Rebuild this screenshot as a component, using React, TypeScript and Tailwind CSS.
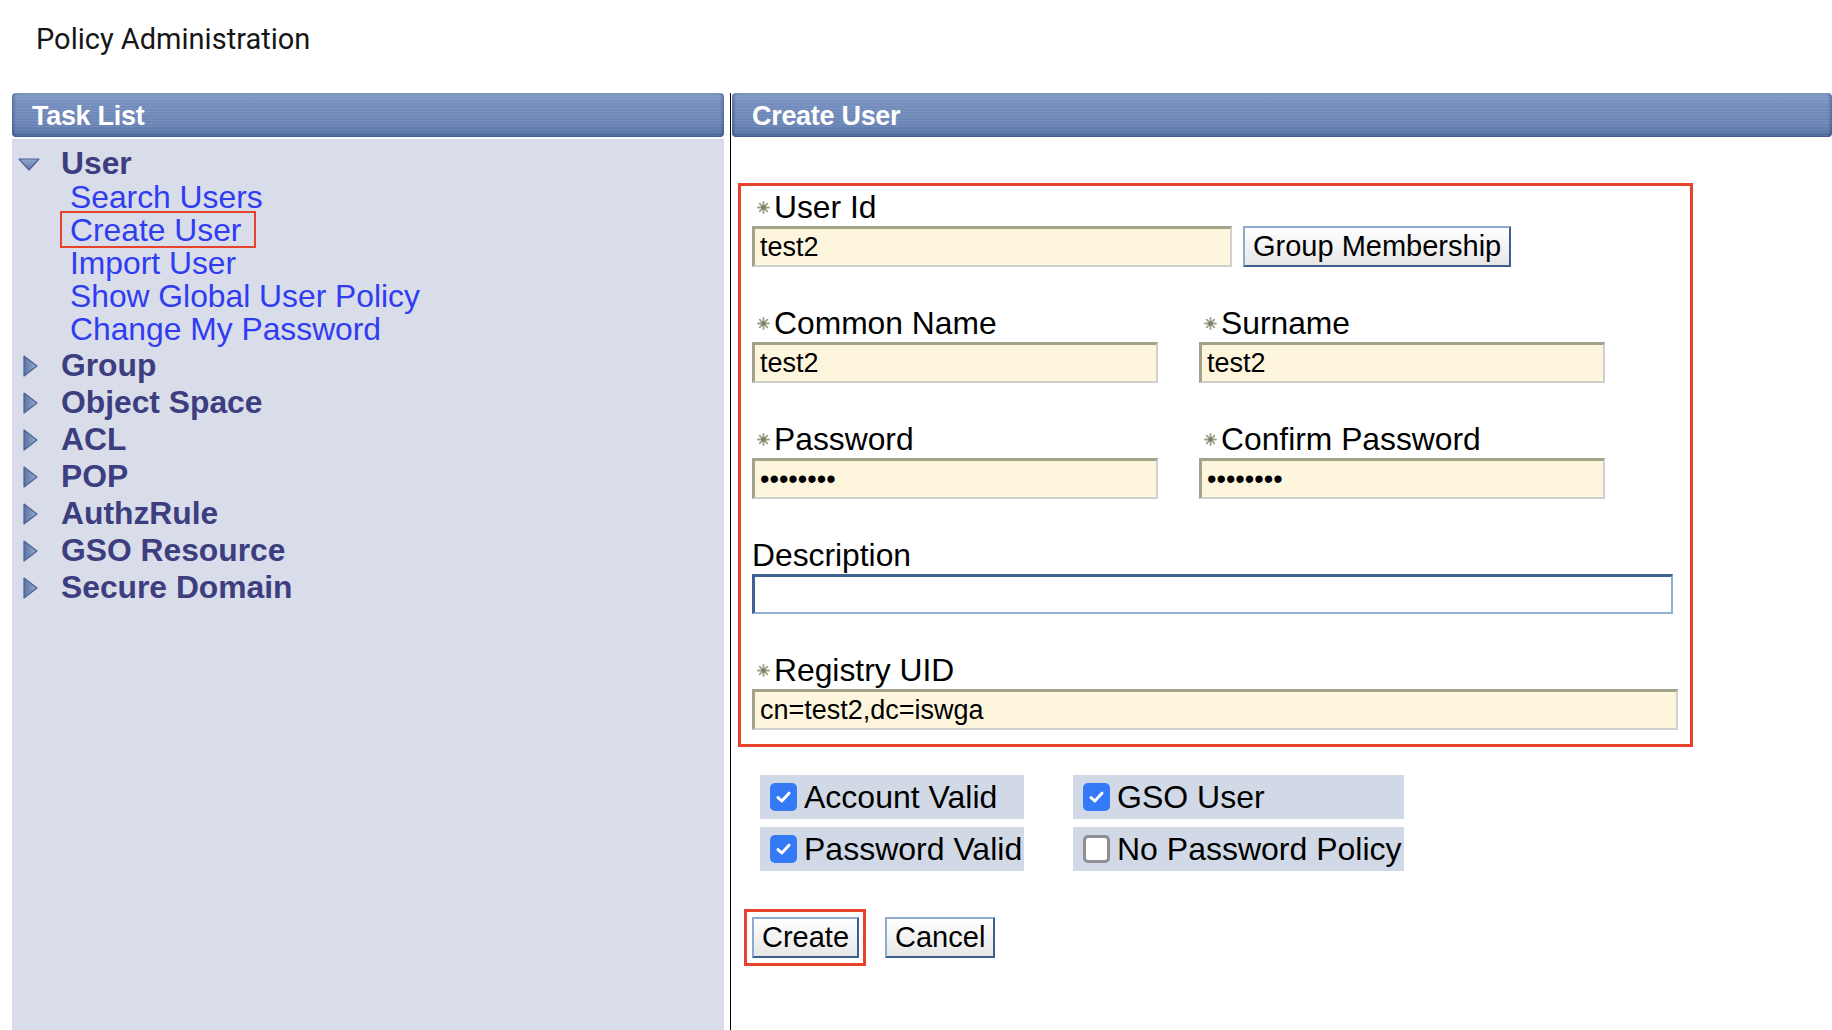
import React from "react";

const headerBg =
  "bg-[image:repeating-linear-gradient(180deg,rgba(255,255,255,0.08)_0px,rgba(255,255,255,0.08)_1px,rgba(0,0,0,0)_1px,rgba(0,0,0,0)_3px),linear-gradient(180deg,#8199c4_0%,#738cbc_30%,#6a85b6_70%,#5d78aa_88%,#48639a_100%)]";

function Header({ title }: { title: string }) {
  return (
    <div
      className={`h-[44px] shrink-0 rounded-[4px] ${headerBg} shadow-[inset_3px_0_3px_-1px_rgba(30,50,90,0.35),inset_-3px_0_3px_-1px_rgba(30,50,90,0.35)] flex items-center pl-[20px] pt-[2px] text-white font-bold text-[27px] tracking-[-0.3px]`}
    >
      {title}
    </div>
  );
}

function DownTri() {
  return (
    <svg width="22" height="13" viewBox="0 0 22 13">
      <defs>
        <linearGradient id="dt" x1="0" y1="0" x2="0" y2="1">
          <stop offset="0" stopColor="#93a8cf" />
          <stop offset="1" stopColor="#5f78a8" />
        </linearGradient>
      </defs>
      <polygon points="1,1 21,1 11,12" fill="url(#dt)" stroke="#4b6393" strokeWidth="1.2" strokeLinejoin="round" />
    </svg>
  );
}

function RightTri() {
  return (
    <svg width="15" height="22" viewBox="0 0 15 22">
      <defs>
        <linearGradient id="rt" x1="0" y1="0" x2="1" y2="0">
          <stop offset="0" stopColor="#5a73a2" />
          <stop offset="1" stopColor="#9aaed3" />
        </linearGradient>
      </defs>
      <polygon points="1,1 14,11 1,21" fill="url(#rt)" stroke="#4a6292" strokeWidth="1.2" strokeLinejoin="round" />
    </svg>
  );
}

function Star() {
  return (
    <svg width="13" height="13" viewBox="0 0 13 13">
      <g stroke="#a09f88" strokeWidth="1.8" strokeLinecap="round">
        <line x1="6.5" y1="1" x2="6.5" y2="12" />
        <line x1="1" y1="6.5" x2="12" y2="6.5" />
        <line x1="2.7" y1="2.7" x2="10.3" y2="10.3" />
        <line x1="10.3" y1="2.7" x2="2.7" y2="10.3" />
      </g>
      <circle cx="6.5" cy="6.5" r="2.2" fill="#7d7c66" />
    </svg>
  );
}

function Label({ text, star = true }: { text: string; star?: boolean }) {
  return (
    <div className="h-[38px] flex items-center text-[31.8px] leading-[38px] text-black whitespace-nowrap">
      {star && (
        <span className="w-[22px] flex justify-center items-center">
          <Star />
        </span>
      )}
      <span>{text}</span>
    </div>
  );
}

function TextInput({
  w,
  value,
  type = "text",
}: {
  w: string;
  value: string;
  type?: string;
}) {
  return (
    <input
      readOnly
      type={type}
      value={value}
      className={`${w} h-[41px] bg-[#fdf6dd] border-t-[3px] border-l-[3px] border-r-2 border-b-2 border-t-[#a3a38a] border-l-[#a3a38a] border-r-[#cfcfcf] border-b-[#cfcfcf] pl-[5px] text-[27px] text-black outline-none font-['Liberation_Sans',Arial,sans-serif]`}
    />
  );
}

function Btn({ children }: { children: React.ReactNode }) {
  return (
    <button className="h-[41px] px-[8px] border-2 border-t-[#8eabcf] border-l-[#8eabcf] border-r-[#3e5f8e] border-b-[#3e5f8e] bg-[linear-gradient(180deg,#ffffff_0%,#f3f3f3_50%,#e6e6e6_100%)] text-[29px] leading-none text-black font-['Liberation_Sans',Arial,sans-serif] whitespace-nowrap">
      {children}
    </button>
  );
}

function Check({ checked }: { checked: boolean }) {
  return checked ? (
    <span className="w-[27px] h-[28px] rounded-[5px] bg-[#3479f6] flex items-center justify-center shrink-0">
      <svg width="17" height="14" viewBox="0 0 17 14">
        <path
          d="M3 7.6 L6.8 11 L14 3.2"
          fill="none"
          stroke="white"
          strokeWidth="3"
          strokeLinecap="round"
          strokeLinejoin="round"
        />
      </svg>
    </span>
  ) : (
    <span className="w-[27px] h-[28px] rounded-[5px] bg-white border-[3px] border-[#8e8e93] shrink-0" />
  );
}

function CheckCell({ checked, text }: { checked: boolean; text: string }) {
  return (
    <div className="h-[44px] bg-[#d1d9e6] flex items-center pl-[10px] gap-[7px] text-[32px] text-black whitespace-nowrap">
      <Check checked={checked} />
      <span>{text}</span>
    </div>
  );
}

const groups = ["Group", "Object Space", "ACL", "POP", "AuthzRule", "GSO Resource", "Secure Domain"];
const links = ["Search Users", "Create User", "Import User", "Show Global User Policy", "Change My Password"];

export default function App() {
  return (
    <div className="w-[1832px] h-[1030px] bg-white overflow-hidden flex flex-col font-['Liberation_Sans',Arial,sans-serif]">
      <div className="h-[93px] shrink-0 pl-[36px] pt-[23px] font-['Roboto',sans-serif] text-[29px] leading-[32px] text-[#161616]">
        Policy Administration
      </div>
      <div className="flex flex-1 min-h-0">
        {/* Left task list */}
        <div className="ml-[12px] w-[712px] flex flex-col">
          <Header title="Task List" />
          <div className="mt-[2px] flex-1 bg-[#d9dce9] pt-[8px]">
            <div className="flex items-center h-[34px]">
              <div className="w-[49px] pl-[6px] flex items-center">
                <DownTri />
              </div>
              <span className="font-bold text-[31.8px] text-[#3c3e7f]">User</span>
            </div>
            <div className="pl-[58px]">
              {links.map((l) => (
                <div key={l} className="h-[33px] leading-[33px] text-[31.8px] text-[#2f3cf2] whitespace-nowrap">
                  {l === "Create User" ? (
                    <span className="relative inline-block">
                      {l}
                      <span className="absolute left-[-10px] top-[-3px] w-[196px] h-[37px] border-2 border-[#e8412c]" />
                    </span>
                  ) : (
                    l
                  )}
                </div>
              ))}
            </div>
            <div className="mt-[1px]">
              {groups.map((g) => (
                <div key={g} className="flex items-center h-[37px]">
                  <div className="w-[49px] pl-[11px] flex items-center">
                    <RightTri />
                  </div>
                  <span className="font-bold text-[31.8px] text-[#3c3e7f] whitespace-nowrap">{g}</span>
                </div>
              ))}
            </div>
          </div>
        </div>
        <div className="w-[6px] shrink-0" />
        {/* Right panel */}
        <div className="flex-1 border-l border-black pl-[1px] flex flex-col min-w-0">
          <Header title="Create User" />
          <div className="ml-[6px] mt-[46px] w-[955px] border-[3px] border-[#e8412c] pl-[11px] pt-[2px] pb-[14px]">
            <Label text="User Id" />
            <div className="flex gap-[11px]">
              <TextInput w="w-[480px]" value="test2" />
              <Btn>Group Membership</Btn>
            </div>

            <div className="mt-[37px] flex gap-[41px]">
              <div className="w-[406px]">
                <Label text="Common Name" />
                <TextInput w="w-[406px]" value="test2" />
              </div>
              <div className="w-[406px]">
                <Label text="Surname" />
                <TextInput w="w-[406px]" value="test2" />
              </div>
            </div>

            <div className="mt-[37px] flex gap-[41px]">
              <div className="w-[406px]">
                <Label text="Password" />
                <TextInput w="w-[406px]" value="password" type="password" />
              </div>
              <div className="w-[406px]">
                <Label text="Confirm Password" />
                <TextInput w="w-[406px]" value="password" type="password" />
              </div>
            </div>

            <div className="mt-[37px]">
              <Label text="Description" star={false} />
              <input
                readOnly
                value=""
                className="w-[921px] h-[40px] bg-white border-t-[3px] border-l-[3px] border-r-2 border-b-2 border-t-[#3f6391] border-l-[#3f6391] border-r-[#90b0d3] border-b-[#90b0d3] outline-none"
              />
            </div>

            <div className="mt-[37px]">
              <Label text="Registry UID" />
              <TextInput w="w-[926px]" value="cn=test2,dc=iswga" />
            </div>
          </div>

          <div className="ml-[28px] mt-[28px] grid grid-cols-[264px_331px] gap-x-[49px] gap-y-[8px]">
            <CheckCell checked text="Account Valid" />
            <CheckCell checked text="GSO User" />
            <CheckCell checked text="Password Valid" />
            <CheckCell checked={false} text="No Password Policy" />
          </div>

          <div className="ml-[12px] mt-[38px] flex items-center">
            <div className="border-[3px] border-[#e8412c] pl-[5px] pr-[4px] py-[5px] flex">
              <Btn>Create</Btn>
            </div>
            <div className="ml-[19px] flex">
              <Btn>Cancel</Btn>
            </div>
          </div>
        </div>
      </div>
    </div>
  );
}
